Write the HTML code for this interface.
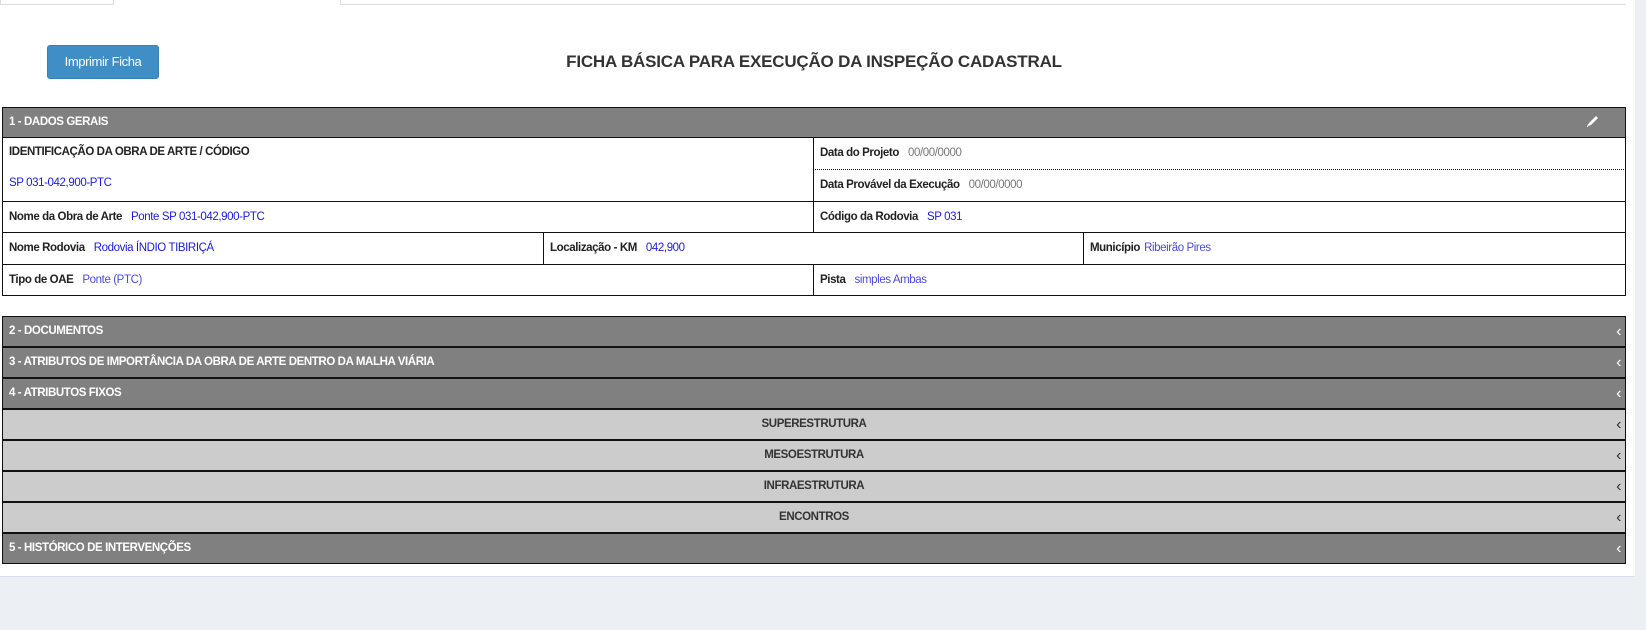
<!DOCTYPE html>
<html><head><meta charset="utf-8"><style>
*{margin:0;padding:0;box-sizing:border-box}
body{width:1646px;height:630px;background:#eceff4;font-family:"Liberation Sans",sans-serif;position:relative;overflow:hidden;font-size:12px;color:#222}
.page{position:absolute;left:0;top:0;width:1635px;height:577px;background:#fff;border-bottom:1px solid #dde}
.abs{position:absolute}
.tab1{left:0;top:-1px;width:114px;height:6px;border:1px solid #ddd;border-top:none}
.tline{left:341px;top:4px;width:1285px;height:1px;background:#ddd}
.tab2{left:340px;top:0;width:1px;height:5px;background:#ddd}
.btn{left:47px;top:45px;width:112px;height:34px;background:#3f8fc6;border:1px solid #3781b3;border-radius:3px;color:#fff;font-size:13px;line-height:32px;text-align:center;letter-spacing:-0.4px}
.title{left:0;width:1628px;top:52px;text-align:center;font-weight:bold;font-size:17px;color:#333;letter-spacing:-0.2px}
.hdr{background:#808080;color:#fff;font-weight:bold;font-size:11.5px;border:1px solid #111;letter-spacing:-0.4px;padding-left:6px}
.cell{border:1px solid #111;background:#fff;padding-left:6px;font-size:11.5px;letter-spacing:-0.4px}
b{font-weight:bold;color:#222;margin-right:9px}
.v{color:#1a1ae6}
.g{color:#777}
.sec{left:2px;width:1624px;height:31px;line-height:29px;border:1px solid #111;font-weight:bold;font-size:11.5px;letter-spacing:-0.4px;padding-left:6px}
.d{background:#808080;color:#fff}
.l{background:#ccc;color:#333;text-align:center;padding-left:0}
.chev{position:absolute;right:4px;top:0;font-weight:normal;color:#fff;font-size:16px}
.l .chev{color:#333}
</style></head><body>
<div class="page">
<div class="abs tab1"></div><div class="abs tab2"></div><div class="abs tline"></div>
<div class="abs btn">Imprimir Ficha</div>
<div class="abs title">FICHA BÁSICA PARA EXECUÇÃO DA INSPEÇÃO CADASTRAL</div>

<div class="abs hdr" style="left:2px;top:107px;width:1624px;height:31px;line-height:29px">1 - DADOS GERAIS
<svg style="position:absolute;left:1582px;top:5px" width="16" height="16" viewBox="0 0 16 16"><path d="M3 13 L4 10 L11 3 L13 5 L6 12 Z" fill="#fff"/><path d="M2.5 14 L3.5 11" stroke="#fff" stroke-width="1"/></svg></div>

<div class="abs cell" style="left:2px;top:137px;width:812px;height:65px;padding-top:8px"><b>IDENTIFICAÇÃO DA OBRA DE ARTE / CÓDIGO</b><div class="v" style="margin-top:19px">SP 031-042,900-PTC</div></div>
<div class="abs cell" style="left:813px;top:137px;width:813px;height:33px;line-height:30px;border-bottom:1px dotted #111"><b>Data do Projeto</b><span class="g">00/00/0000</span></div>
<div class="abs cell" style="left:813px;top:170px;width:813px;height:32px;line-height:30px;border-top:none"><b>Data Provável da Execução</b><span class="g">00/00/0000</span></div>

<div class="abs cell" style="left:2px;top:201px;width:812px;height:32px;line-height:30px"><b>Nome da Obra de Arte</b><span class="v">Ponte SP 031-042,900-PTC</span></div>
<div class="abs cell" style="left:813px;top:201px;width:813px;height:32px;line-height:30px"><b>Código da Rodovia</b><span class="v">SP 031</span></div>

<div class="abs cell" style="left:2px;top:232px;width:542px;height:33px;line-height:31px"><b>Nome Rodovia</b><span class="v">Rodovia ÍNDIO TIBIRIÇÁ</span></div>
<div class="abs cell" style="left:543px;top:232px;width:541px;height:33px;line-height:31px"><b>Localização - KM</b><span class="v">042,900</span></div>
<div class="abs cell" style="left:1083px;top:232px;width:543px;height:33px;line-height:31px"><b style="margin-right:4px">Município</b><span class="v" style="color:#4a4ae0">Ribeirão Pires</span></div>

<div class="abs cell" style="left:2px;top:264px;width:812px;height:32px;line-height:30px"><b>Tipo de OAE</b><span class="v" style="color:#4a4ae0">Ponte (PTC)</span></div>
<div class="abs cell" style="left:813px;top:264px;width:813px;height:32px;line-height:30px"><b>Pista</b><span class="v" style="color:#4a4ae0">simples Ambas</span></div>

<div class="abs sec d" style="top:316px">2 - DOCUMENTOS<span class="chev">‹</span></div>
<div class="abs sec d" style="top:347px">3 - ATRIBUTOS DE IMPORTÂNCIA DA OBRA DE ARTE DENTRO DA MALHA VIÁRIA<span class="chev">‹</span></div>
<div class="abs sec d" style="top:378px">4 - ATRIBUTOS FIXOS<span class="chev">‹</span></div>
<div class="abs sec l" style="top:409px">SUPERESTRUTURA<span class="chev">‹</span></div>
<div class="abs sec l" style="top:440px">MESOESTRUTURA<span class="chev">‹</span></div>
<div class="abs sec l" style="top:471px">INFRAESTRUTURA<span class="chev">‹</span></div>
<div class="abs sec l" style="top:502px">ENCONTROS<span class="chev">‹</span></div>
<div class="abs sec d" style="top:533px">5 - HISTÓRICO DE INTERVENÇÕES<span class="chev">‹</span></div>
</div>
</body></html>
